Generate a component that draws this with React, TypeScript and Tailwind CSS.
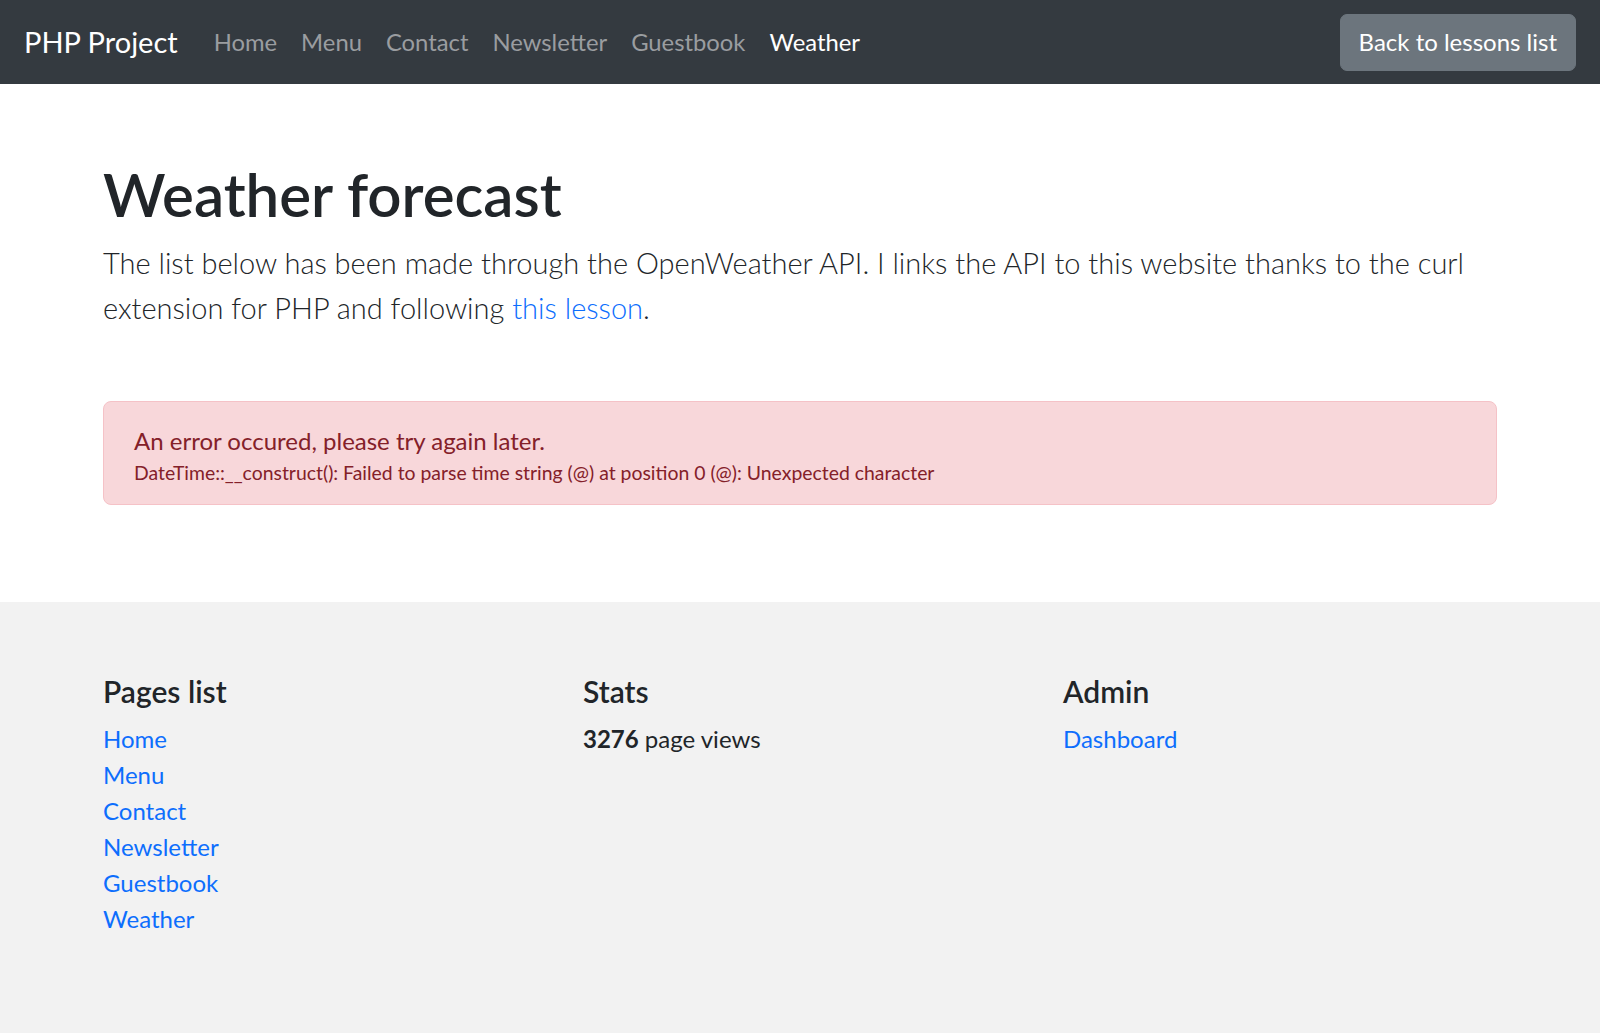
import React from 'react';

const navLinks = ['Home', 'Menu', 'Contact', 'Newsletter', 'Guestbook', 'Weather'];

export default function App() {
  return (
    <div className="min-h-screen bg-white text-[#212529] font-['Lato','Open_Sans',sans-serif]">
      {/* Navbar */}
      <nav className="flex h-[84px] items-center bg-[#343a40] px-[24px]">
        <a href="#" className="mr-[24px] text-[29px] leading-[44px] text-white">
          PHP Project
        </a>
        <ul className="flex">
          {navLinks.map((link) => (
            <li key={link}>
              <a
                href="#"
                className={`block px-[12px] text-[23.8px] leading-[34px] ${
                  link === 'Weather' ? 'text-white' : 'text-[#9a9da0]'
                }`}
              >
                {link}
              </a>
            </li>
          ))}
        </ul>
        <button className="ml-auto h-[57px] rounded-[7px] border border-[#6c757d] bg-[#6c757d] px-[18px] text-[24px] text-white">
          Back to lessons list
        </button>
      </nav>

      {/* Content */}
      <main className="mx-auto w-[1394px] pt-[74px] pb-[97px]">
        <h1 className="mb-[10px] text-[60px] font-semibold leading-[72px]">Weather forecast</h1>
        <p className="text-[29px] font-light leading-[45px]">
          The list below has been made through the OpenWeather API. I links the API to this website thanks to the curl
          extension for PHP and following{' '}
          <a href="#" className="text-[#0d6efd]">
            this lesson
          </a>
          .
        </p>

        <div className="mt-[71px] rounded-[8px] border border-[#f5c2c7] bg-[#f8d7da] px-[30px] pt-[22px] pb-[17px] text-[#842029]">
          <p className="text-[24px] leading-[34px]">An error occured, please try again later.</p>
          <p className="text-[19.4px] leading-[29px]">
            DateTime::__construct(): Failed to parse time string (@) at position 0 (@): Unexpected character
          </p>
        </div>
      </main>

      {/* Footer */}
      <footer className="min-h-[440px] bg-[#f2f2f2]">
        <div className="mx-auto grid w-[1394px] grid-cols-[480px_480px_1fr] pt-[72px] pb-[72px]">
          <div>
            <h5 className="mb-[12px] text-[30px] font-semibold leading-[35px]">Pages list</h5>
            <ul>
              {navLinks.map((link) => (
                <li key={link}>
                  <a href="#" className="text-[24px] leading-[36px] text-[#0d6efd]">
                    {link}
                  </a>
                </li>
              ))}
            </ul>
          </div>
          <div>
            <h5 className="mb-[12px] text-[30px] font-semibold leading-[35px]">Stats</h5>
            <p className="text-[24px] leading-[36px]">
              <strong className="font-bold">3276</strong> page views
            </p>
          </div>
          <div>
            <h5 className="mb-[12px] text-[30px] font-semibold leading-[35px]">Admin</h5>
            <a href="#" className="text-[24px] leading-[36px] text-[#0d6efd]">
              Dashboard
            </a>
          </div>
        </div>
      </footer>
    </div>
  );
}
